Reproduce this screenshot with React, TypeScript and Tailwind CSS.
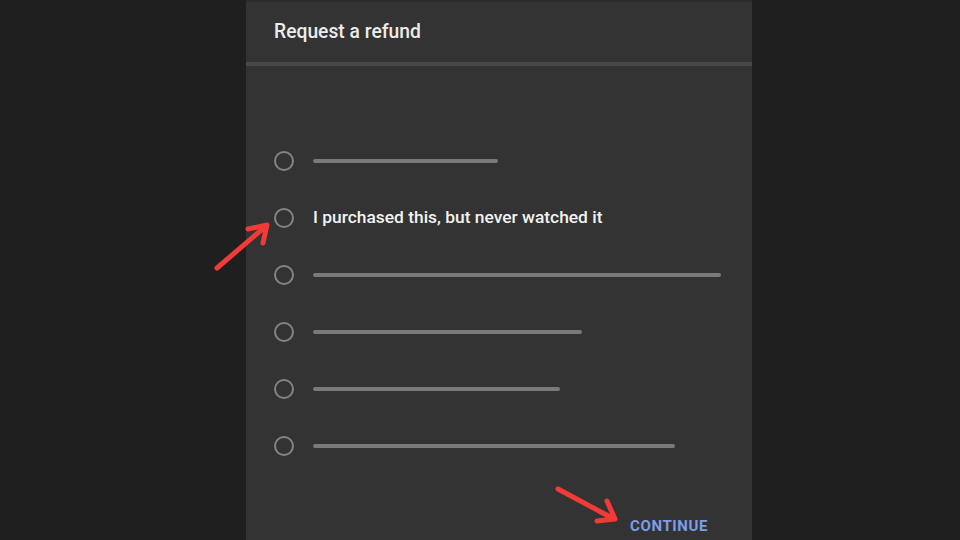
const lines = [185, null, 408, 269, 247, 362];

function Arrow({ d }: { d: string }) {
  return (
    <path d={d} fill="none" stroke="#f23b36" strokeWidth={5} strokeLinecap="round" strokeLinejoin="round" />
  );
}

export default function App() {
  return (
    <div className="relative flex h-[540px] w-[960px] overflow-hidden bg-[#1f1f1f] pl-[246px] font-['Roboto',sans-serif]">
      <div className="flex w-[506px] flex-col border-t-2 border-[#2b2b2b] bg-[#333333]">
        {/* header */}
        <div className="flex h-[60px] items-center px-[28px] pt-[1px]">
          <h1 className="text-[19.3px] font-medium text-[#ececec]">Request a refund</h1>
        </div>
        <div className="h-[4px] bg-[#484848]" />

        {/* options */}
        <div className="flex flex-col pt-[66px]">
          {lines.map((w, i) => (
            <div key={i} className="flex h-[57px] items-center gap-[19px] px-[28px]">
              <div className="h-[20px] w-[20px] shrink-0 rounded-full border-2 border-[#848484]" />
              {w === null ? (
                <span className="text-[17.4px] font-medium text-[#f2f2f2]">I purchased this, but never watched it</span>
              ) : (
                <div className="h-[4px] rounded-full bg-[#7a7a7a]" style={{ width: w }} />
              )}
            </div>
          ))}
        </div>

        <div className="mt-auto flex justify-end pb-[3px] pr-[44px]">
          <button className="text-[15px] font-bold tracking-[0.04em] text-[#7d9de6]">CONTINUE</button>
        </div>
      </div>

      {/* annotation arrows */}
      <svg className="pointer-events-none absolute inset-0" width="960" height="540">
        <Arrow d="M217 268 L266 226 M248 229 L267 225 L263 243" />
        <Arrow d="M558 489 L614 519 M607 501 L615 519 L597 521" />
      </svg>
    </div>
  );
}
